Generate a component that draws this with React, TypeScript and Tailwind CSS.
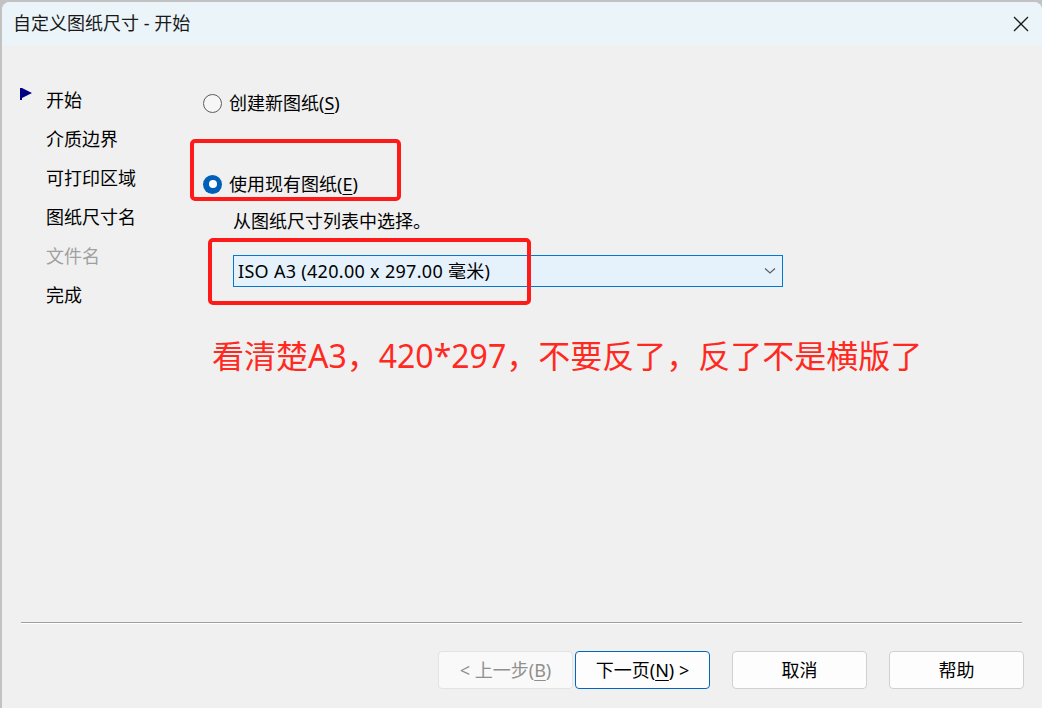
import React from 'react'

const navItems = [
  { label: '开始', active: true },
  { label: '介质边界' },
  { label: '可打印区域' },
  { label: '图纸尺寸名' },
  { label: '文件名', disabled: true },
  { label: '完成' },
]

function Radio({ checked }: { checked?: boolean }) {
  if (checked) {
    return (
      <span className="w-[19px] h-[19px] rounded-full bg-[#005fb8] flex items-center justify-center shrink-0">
        <span className="w-[8px] h-[8px] rounded-full bg-white" />
      </span>
    )
  }
  return <span className="w-[19px] h-[19px] rounded-full border border-[#5c5c5c] bg-[#f6f6f6] shrink-0" />
}

function Btn({ children, variant }: { children: React.ReactNode; variant?: 'disabled' | 'primary' }) {
  const cls =
    variant === 'disabled'
      ? 'bg-[#f9f9f9] border-[#e3e3e3] text-[#8f8f8f]'
      : variant === 'primary'
        ? 'bg-[#fdfdfd] border-[#0067c0] text-black'
        : 'bg-[#fdfdfd] border-[#d0d0d0] text-black'
  return (
    <div className={`w-[135px] h-[38px] rounded-[4px] border flex items-center justify-center text-[18px] ${cls}`}>
      {children}
    </div>
  )
}

export default function App() {
  return (
    <div className="w-[1042px] h-[708px] bg-[#c2c2c2] pl-[2px] pt-[2px] overflow-hidden font-['Noto_Sans','Noto_Sans_CJK_SC',sans-serif]">
      <div className="w-[1040px] h-[720px] bg-[#f0f0f0] rounded-[8px] overflow-hidden flex flex-col">
        {/* Title bar */}
        <div className="h-[43px] bg-[#ebf4f9] flex items-center justify-between pl-[11px] pr-[13px] shrink-0">
          <span className="text-[18px] text-[#1a1a1a]">自定义图纸尺寸 - 开始</span>
          <svg width="16" height="16" viewBox="0 0 16 16">
            <path d="M1 1 L15 15 M15 1 L1 15" stroke="#1a1a1a" strokeWidth="1.3" />
          </svg>
        </div>

        {/* Body */}
        <div className="flex h-[577px]">
          {/* Nav */}
          <div className="w-[188px] pt-[36px] flex flex-col">
            {navItems.map((it) => (
              <div key={it.label} className="h-[39px] flex items-center relative">
                {it.active && (
                  <svg width="12" height="12" viewBox="0 0 12 12" className="absolute left-[18px] top-[7px]">
                    <polygon points="0,0 2,0 12,5 2,10 2,12 0,12" fill="#000080" />
                  </svg>
                )}
                <span className={`pl-[44px] text-[18px] ${it.disabled ? 'text-[#a0a0a0]' : 'text-black'}`}>{it.label}</span>
              </div>
            ))}
          </div>

          {/* Main */}
          <div className="relative flex-1 pl-[13px] pt-[44px] flex flex-col">
            <div className="flex items-center gap-[7px] h-[28px]">
              <Radio />
              <span className="text-[18px] text-black">
                创建新图纸(<span className="underline underline-offset-[3px]">S</span>)
              </span>
            </div>
            <div className="flex items-center gap-[7px] h-[28px] mt-[53px]">
              <Radio checked />
              <span className="text-[18px] text-black">
                使用现有图纸(<span className="underline underline-offset-[3px]">E</span>)
              </span>
            </div>
            <div className="pl-[30px] mt-[11px] text-[18px] text-black leading-[24px]">从图纸尺寸列表中选择。</div>
            <div className="ml-[30px] mt-[22px] w-[550px] h-[32px] bg-[#e5f1fb] border border-[#0078d4] flex items-center justify-between pl-[4px] pr-[6px]">
              <span className="text-[18px] text-black tracking-[0.3px]">ISO A3 (420.00 x 297.00 毫米)</span>
              <svg width="12" height="8" viewBox="0 0 12 8">
                <path d="M1 1.5 L6 6 L11 1.5" stroke="#5f5f5f" strokeWidth="1.2" fill="none" />
              </svg>
            </div>
            <div className="ml-[9px] mt-[49px] text-[32px] leading-[40px] text-[#ff2a1f]">
              看清楚A3，420*297，不要反了，反了不是横版了
            </div>

            {/* annotation boxes */}
            <div className="absolute left-[0px] top-[94px] w-[211px] h-[62px] border-[4px] border-[#ff1a1a] rounded-[5px]" />
            <div className="absolute left-[18px] top-[193px] w-[323px] h-[67px] border-[4px] border-[#ff1a1a] rounded-[5px]" />
          </div>
        </div>

        {/* Separator */}
        <div className="ml-[19px] w-[1001px] h-[2px] border-t border-[#a0a0a0] border-b-white border-b" />

        {/* Footer */}
        <div className="flex items-center pl-[436px] mt-[27px]">
          <Btn variant="disabled">
            &lt; 上一步(<span className="underline underline-offset-[3px]">B</span>)
          </Btn>
          <div className="ml-[2px]">
            <Btn variant="primary">
              下一页(<span className="underline underline-offset-[3px]">N</span>) &gt;
            </Btn>
          </div>
          <div className="ml-[22px]">
            <Btn>取消</Btn>
          </div>
          <div className="ml-[22px]">
            <Btn>帮助</Btn>
          </div>
        </div>
      </div>
    </div>
  )
}
